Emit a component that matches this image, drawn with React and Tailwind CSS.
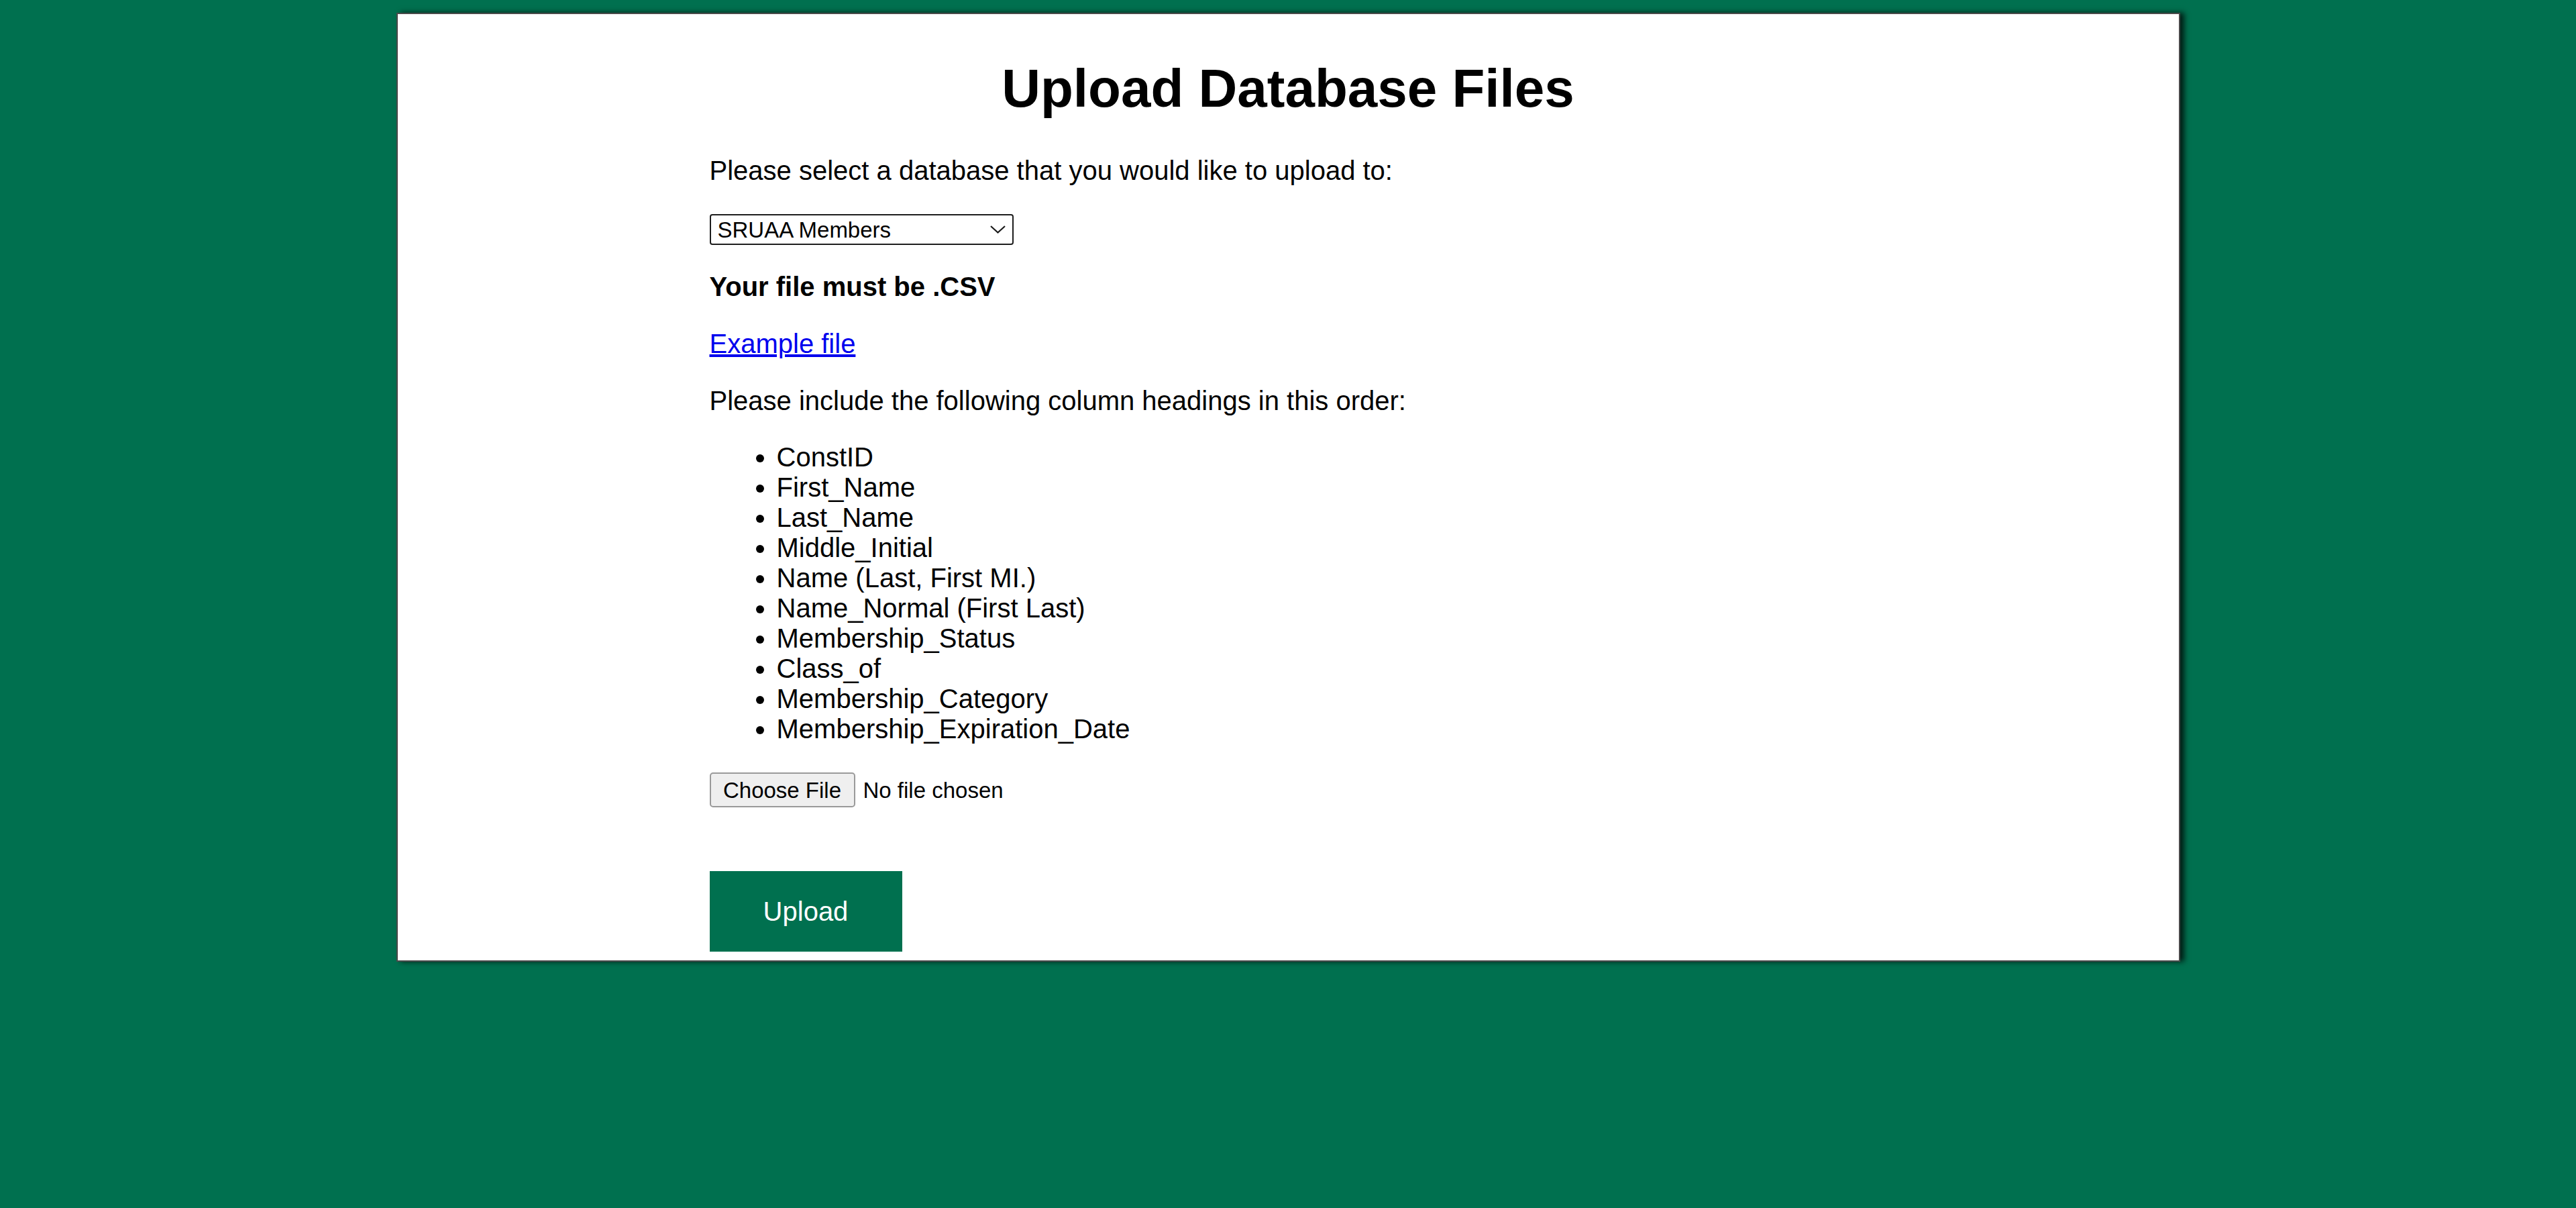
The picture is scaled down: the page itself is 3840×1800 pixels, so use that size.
import React from 'react';

// Column headings the uploaded CSV has to contain, in order
const COLUMNS = [
  'ConstID',
  'First_Name',
  'Last_Name',
  'Middle_Initial',
  'Name (Last, First MI.)',
  'Name_Normal (First Last)',
  'Membership_Status',
  'Class_of',
  'Membership_Category',
  'Membership_Expiration_Date',
];

const Chevron = () => (
  <svg width="23" height="12" viewBox="0 0 23 12" fill="none">
    <path d="M1 1 L11.5 10.5 L22 1" stroke="#1a1a1a" strokeWidth="2.2" />
  </svg>
);

const App = () => {
  return (
    <div className="min-h-screen bg-[#00704f] pt-[19px] font-['Liberation_Sans',Arial,sans-serif] text-black">
      <div className="mx-auto w-[2659px] border-2 border-[#4a4a4a] bg-white pt-[65px] pb-[13px] shadow-[6px_0_8px_rgba(0,0,0,0.75)]">
        <h1 className="mb-[54px] text-center text-[80px] font-bold leading-[92px]">Upload Database Files</h1>

        <div className="mx-auto w-[1725px] text-[40px] leading-[45px]">
          <p className="mb-[42px]">Please select a database that you would like to upload to:</p>

          {/* Database picker */}
          <div className="mb-[40px] flex h-[46px] w-[453px] items-center justify-between rounded-[4px] border-2 border-[#1e1e1e] bg-white pl-[10px] pr-[10px] text-[33px] leading-none">
            <span>SRUAA Members</span>
            <Chevron />
          </div>

          <p className="mb-[40px] font-bold">Your file must be .CSV</p>

          <p className="mb-[40px]">
            <a href="#" className="text-[#0000ee] underline">Example file</a>
          </p>

          <p className="mb-[39px]">Please include the following column headings in this order:</p>

          <ul className="mb-[42px] list-disc pl-[100px]">
            {COLUMNS.map((col) => (
              <li key={col}>{col}</li>
            ))}
          </ul>

          {/* File input */}
          <div className="mb-[95px] flex h-[52px] items-center text-[33px] leading-none">
            <span className="flex h-[52px] w-[217px] items-center justify-center rounded-[5px] border-2 border-[#9a9a9a] bg-[#efefef]">
              Choose File
            </span>
            <span className="ml-[12px]">No file chosen</span>
          </div>

          <button className="h-[120px] w-[287px] bg-[#00704f] text-[40px] text-white">Upload</button>
        </div>
      </div>
    </div>
  );
};

export default App;
